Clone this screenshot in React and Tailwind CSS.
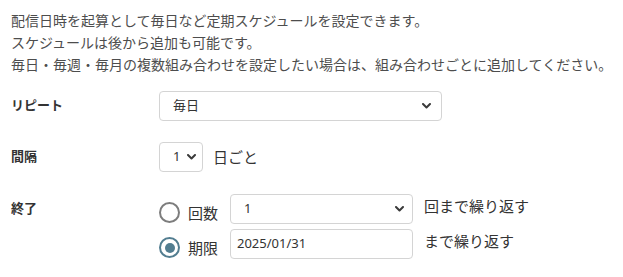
import React from "react";

const Chevron = () => (
  <svg width="9" height="6" viewBox="0 0 9 6" className="shrink-0">
    <path d="M1 1 L4.5 4.5 L8 1" fill="none" stroke="#3a3a3a" strokeWidth="2" strokeLinecap="round" strokeLinejoin="round" />
  </svg>
);

const SelectBox = ({ value, className, textClass }) => (
  <div className={`flex h-[30px] items-center justify-between rounded-[4px] border border-[#d4d4d4] bg-white ${className}`}>
    <span className={`text-[13px] text-[#333] ${textClass}`}>{value}</span>
    <Chevron />
  </div>
);

const Radio = ({ checked }) =>
  checked ? (
    <div className="flex h-[21px] w-[21px] items-center justify-center rounded-full border-[2.5px] border-[#527d90]">
      <div className="h-[10px] w-[10px] rounded-full bg-[#527d90]" />
    </div>
  ) : (
    <div className="h-[21px] w-[21px] rounded-full border-2 border-[#7d7d7d]" />
  );

export default function App() {
  return (
    <div
      className="min-h-[277px] w-[623px] bg-white pl-[11px] pt-[10px]"
      style={{ fontFamily: '"Noto Sans", "Noto Sans CJK JP", sans-serif' }}
    >
      <div className="text-[14px] leading-[22px] text-[#4d4d4d]">
        <p>配信日時を起算として毎日など定期スケジュールを設定できます。</p>
        <p>スケジュールは後から追加も可能です。</p>
        <p>毎日・毎週・毎月の複数組み合わせを設定したい場合は、組み合わせごとに追加してください。</p>
      </div>

      <div className="mt-[15px] flex flex-col">
        <div className="flex items-center">
          <div className="w-[148px] text-[13px] font-bold text-[#333]">リピート</div>
          <SelectBox value="毎日" className="w-[283px] pl-[13px] pr-[10px]" />
        </div>

        <div className="mt-[21px] flex items-center">
          <div className="w-[148px] text-[13px] font-bold text-[#333]">間隔</div>
          <SelectBox value="1" className="w-[44px] pl-[13px] pr-[6px]" />
          <span className="ml-[10px] text-[15px] text-[#333]">日ごと</span>
        </div>

        <div className="mt-[22px] flex items-start">
          <div className="flex h-[30px] w-[148px] items-center text-[13px] font-bold text-[#333]">終了</div>
          <div className="flex flex-col gap-[5px]">
            <div className="flex items-start">
              <div className="mt-[8px] flex w-[71px] items-center gap-[8px]">
                <Radio checked={false} />
                <span className="text-[15px] leading-[20px] text-[#333]">回数</span>
              </div>
              <SelectBox value="1" className="w-[183px] pl-[13px] pr-[8px]" />
              <span className="ml-[11px] text-[15px] leading-[24px] text-[#333]">回まで繰り返す</span>
            </div>
            <div className="flex items-start">
              <div className="mt-[8px] flex w-[71px] items-center gap-[8px]">
                <Radio checked />
                <span className="text-[15px] leading-[20px] text-[#333]">期限</span>
              </div>
              <div className="flex h-[30px] w-[183px] items-center rounded-[4px] border border-[#d4d4d4] bg-white pl-[6px]">
                <span className="text-[13px] text-[#333]">2025/01/31</span>
              </div>
              <span className="ml-[11px] text-[15px] leading-[24px] text-[#333]">まで繰り返す</span>
            </div>
          </div>
        </div>
      </div>
    </div>
  );
}
